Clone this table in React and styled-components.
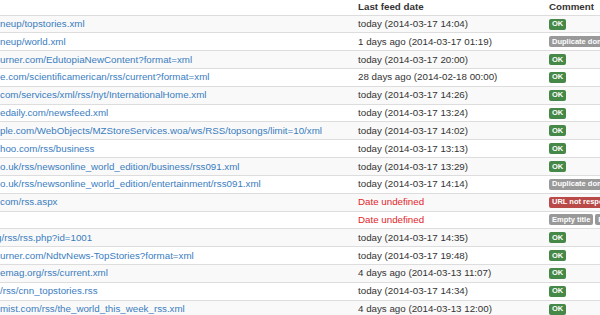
import React from "react";
import styled, { createGlobalStyle } from "styled-components";

const Global = createGlobalStyle`
  html, body { margin: 0; padding: 0; background: #fff; }
  body {
    font-family: "Liberation Sans", Arial, sans-serif;
    font-size: 9.75px;
    color: #333;
    overflow: hidden;
  }
`;

const Table = styled.div`
  width: 600px;
  height: 315px;
  overflow: hidden;
  display: flex;
  flex-direction: column;
`;

const Row = styled.div`
  display: grid;
  grid-template-columns: 352px 191px 240px;
  flex: 0 0 auto;
  box-sizing: border-box;
  height: ${(p) => (p.$head ? "14.6px" : "17.82px")};
  border-top: ${(p) => (p.$head ? "0" : "1px solid #ddd")};
  background: ${(p) => (p.$striped ? "#f9f9f9" : "#fff")};
  align-items: center;
`;

const Cell = styled.div`
  padding-left: ${(p) => (p.$first ? "0" : "6px")};
  white-space: nowrap;
  overflow: hidden;
  line-height: 12px;
  font-weight: ${(p) => (p.$head ? 700 : 400)};
  color: ${(p) => (p.$error ? "#e3262b" : "#333")};
  display: flex;
  gap: 2px;
  align-items: center;
`;

const Link = styled.a`
  color: #3a7dbf;
  text-decoration: none;
  margin-left: ${(p) => p.$shift || 0}px;
`;

const Label = styled.span`
  display: inline-block;
  font-size: 7.5px;
  font-weight: 700;
  line-height: 8px;
  color: #fff;
  padding: 1.5px 3px;
  border-radius: 2px;
  white-space: nowrap;
  background: ${(p) =>
    p.$kind === "ok" ? "#468847" : p.$kind === "err" ? "#b94a48" : "#999"};
`;

const rows = [
  ["neup/topstories.xml", "today (2014-03-17 14:04)", [["ok", "OK"]]],
  ["neup/world.xml", "1 days ago (2014-03-17 01:19)", [["grey", "Duplicate domain"]]],
  ["urner.com/EdutopiaNewContent?format=xml", "today (2014-03-17 20:00)", [["ok", "OK"]]],
  ["e.com/scientificamerican/rss/current?format=xml", "28 days ago (2014-02-18 00:00)", [["ok", "OK"]]],
  ["com/services/xml/rss/nyt/InternationalHome.xml", "today (2014-03-17 14:26)", [["ok", "OK"]]],
  ["edaily.com/newsfeed.xml", "today (2014-03-17 13:24)", [["ok", "OK"]]],
  ["ple.com/WebObjects/MZStoreServices.woa/ws/RSS/topsongs/limit=10/xml", "today (2014-03-17 14:02)", [["ok", "OK"]]],
  ["hoo.com/rss/business", "today (2014-03-17 13:13)", [["ok", "OK"]]],
  ["o.uk/rss/newsonline_world_edition/business/rss091.xml", "today (2014-03-17 13:29)", [["ok", "OK"]]],
  ["o.uk/rss/newsonline_world_edition/entertainment/rss091.xml", "today (2014-03-17 14:14)", [["grey", "Duplicate domain"]]],
  ["com/rss.aspx", null, [["err", "URL not responding"]]],
  ["", null, [["grey", "Empty title"], ["grey", "Empty description"]]],
  ["g/rss/rss.php?id=1001", "today (2014-03-17 14:35)", [["ok", "OK"]], -4],
  ["urner.com/NdtvNews-TopStories?format=xml", "today (2014-03-17 19:48)", [["ok", "OK"]]],
  ["emag.org/rss/current.xml", "4 days ago (2014-03-13 11:07)", [["ok", "OK"]]],
  ["/rss/cnn_topstories.rss", "today (2014-03-17 14:34)", [["ok", "OK"]]],
  ["mist.com/rss/the_world_this_week_rss.xml", "4 days ago (2014-03-13 12:00)", [["ok", "OK"]]],
];

export default function App() {
  return (
    <>
      <Global />
      <Table>
        <Row $head>
          <Cell $first $head />
          <Cell $head>Last feed date</Cell>
          <Cell $head>Comment</Cell>
        </Row>
        {rows.map(([url, date, labels, shift], i) => (
          <Row key={i} $striped={i % 2 === 0}>
            <Cell $first>
              <Link href="#" $shift={shift}>{url}</Link>
            </Cell>
            <Cell $error={!date}>{date || "Date undefined"}</Cell>
            <Cell>
              {labels.map(([k, t], j) => (
                <Label key={j} $kind={k}>{t}</Label>
              ))}
            </Cell>
          </Row>
        ))}
      </Table>
    </>
  );
}
